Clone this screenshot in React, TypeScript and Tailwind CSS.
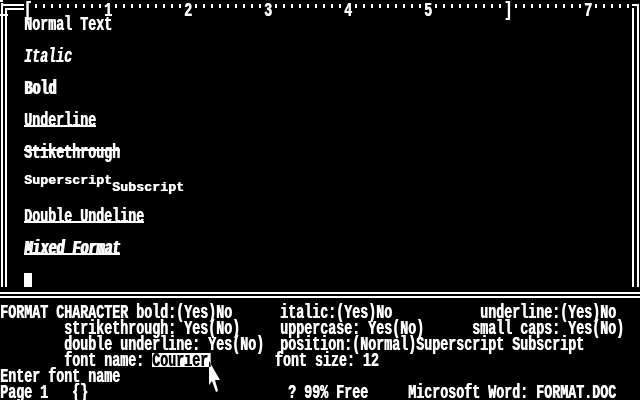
import React from "react";

const txt = "origin-left scale-x-[0.66667] whitespace-pre text-[20px] leading-[18px] font-bold [text-shadow:0.7px_0_0_currentColor]";
const deco = "inline-block h-4 bg-[linear-gradient(#fff,#fff)] bg-no-repeat";

function pad(s: string, n: number) {
  return s.length >= n ? s : s + " ".repeat(n - s.length);
}

function Line({ children, indent }: { children?: React.ReactNode; indent?: boolean }) {
  return (
    <div className={"h-4 " + (indent ? "pl-4" : "")}>
      <div className={txt}>{children}</div>
    </div>
  );
}

function Glyph({ ch }: { ch: string }) {
  return (
    <div className="w-2 h-4">
      <span className="inline-block origin-left scale-x-[0.66667] text-[20px] leading-4 font-bold whitespace-pre [text-shadow:0.7px_0_0_#fff]">{ch}</span>
    </div>
  );
}

function Tick() {
  return (
    <div className="w-2 h-4 pt-1 pl-[3px]">
      <div className="w-[2px] h-1 bg-white" />
    </div>
  );
}

function DoubleH() {
  return (
    <div className="w-2 h-4 pt-1">
      <div className="h-[6px] border-y-2 border-white" />
    </div>
  );
}

function Ruler() {
  const cells: React.ReactNode[] = [];
  const nums: Record<number, string> = { 13: "1", 23: "2", 33: "3", 43: "4", 53: "5", 73: "7" };
  for (let c = 1; c <= 78; c++) {
    if (c < 3) cells.push(<DoubleH key={c} />);
    else if (c === 3) cells.push(<Glyph key={c} ch="[" />);
    else if (c === 63) cells.push(<Glyph key={c} ch="]" />);
    else if (nums[c]) cells.push(<Glyph key={c} ch={nums[c]} />);
    else cells.push(<Tick key={c} />);
  }
  return (
    <div className="flex h-4">
      <svg width="8" height="16" className="shrink-0">
        <rect x="0" y="0" width="3" height="2" fill="#fff" />
        <rect x="1" y="3" width="2" height="13" fill="#fff" />
        <rect x="1" y="4" width="7" height="2" fill="#fff" />
        <rect x="5" y="8" width="2" height="8" fill="#fff" />
        <rect x="5" y="8" width="3" height="2" fill="#fff" />
        <rect x="0" y="14" width="8" height="2" fill="#fff" />
      </svg>
      {cells}
      <svg width="8" height="16" className="shrink-0">
        <rect x="0" y="4" width="7" height="2" fill="#fff" />
        <rect x="5" y="4" width="2" height="12" fill="#fff" />
        <rect x="0" y="8" width="2" height="8" fill="#fff" />
      </svg>
    </div>
  );
}

export default function App() {
  return (
    <div className="relative w-[640px] h-[400px] overflow-hidden bg-black text-white font-['Liberation_Mono',monospace]">
      {/* document window */}
      <div className="h-[288px] flex flex-col">
        <Ruler />
        <div className="flex flex-1">
          <div className="w-2 shrink-0">
            <div className="ml-px w-[6px] h-[271px] border-x-2 border-white" />
          </div>
          <div className="flex-1 flex flex-col">
            <Line indent>Normal Text</Line>
            <Line />
            <Line indent><span className="italic">Italic</span></Line>
            <Line />
            <Line indent><span className="[text-shadow:2px_0_0_#fff]">Bold</span></Line>
            <Line />
            <Line indent><span className={deco + " bg-[length:100%_2px] bg-[position:0_13px]"}>Underline</span></Line>
            <Line />
            <Line indent><span className={deco + " bg-[length:100%_2px] bg-[position:0_5px]"}>Stikethrough</span></Line>
            <Line />
            <Line indent>
              <span className="inline-block h-4 origin-top scale-y-[0.6]">Superscript</span>
              <span className="inline-block h-4 origin-bottom scale-y-[0.6]">Subscript</span>
            </Line>
            <Line />
            <Line indent><span className={deco + " bg-[length:100%_2px] bg-[position:0_13px]"}>Double Undeline</span></Line>
            <Line />
            <Line indent><span className={deco + " italic [text-shadow:2px_0_0_#fff] bg-[length:100%_2px] bg-[position:0_13px]"}>Mixed Format</span></Line>
            <Line />
            <div className="h-4 pl-4 pt-px">
              <div className="w-2 h-[14px] bg-white" />
            </div>
          </div>
          <div className="w-2 shrink-0">
            <div className="w-[7px] h-[271px] border-x-2 border-white" />
          </div>
        </div>
      </div>
      {/* separator */}
      <div className="h-4 pt-1">
        <div className="h-[6px] border-y-2 border-white" />
      </div>
      {/* command area */}
      <Line>{pad(pad("FORMAT CHARACTER bold:(Yes)No", 35) + "italic:(Yes)No", 60) + "underline:(Yes)No"}</Line>
      <Line>{pad(pad("        strikethrough: Yes(No)", 35) + "uppercase: Yes(No)", 59) + "small caps: Yes(No)"}</Line>
      <Line>{pad("        double underline: Yes(No)", 35) + "position:(Normal)Superscript Subscript"}</Line>
      <Line>
        {"        font name: "}
        <span className={deco + " w-[88px] text-black bg-[length:100%_14px] bg-[position:0_1px]"}>Courier</span>
        {" ".repeat(35 - 19 - 8) + "font size: 12"}
      </Line>
      <Line>Enter font name</Line>
      <Line>{pad(pad("Page 1   {}", 36) + "? 99% Free", 51) + "Microsoft Word: FORMAT.DOC"}</Line>
      {/* mouse pointer */}
      <svg width="12" height="32" className="absolute left-[209px] top-[361px] mix-blend-difference">
        <polygon points="0,0 0,24 3,20 7,31 9,30 6,19 11,19" fill="#fff" />
      </svg>
    </div>
  );
}
